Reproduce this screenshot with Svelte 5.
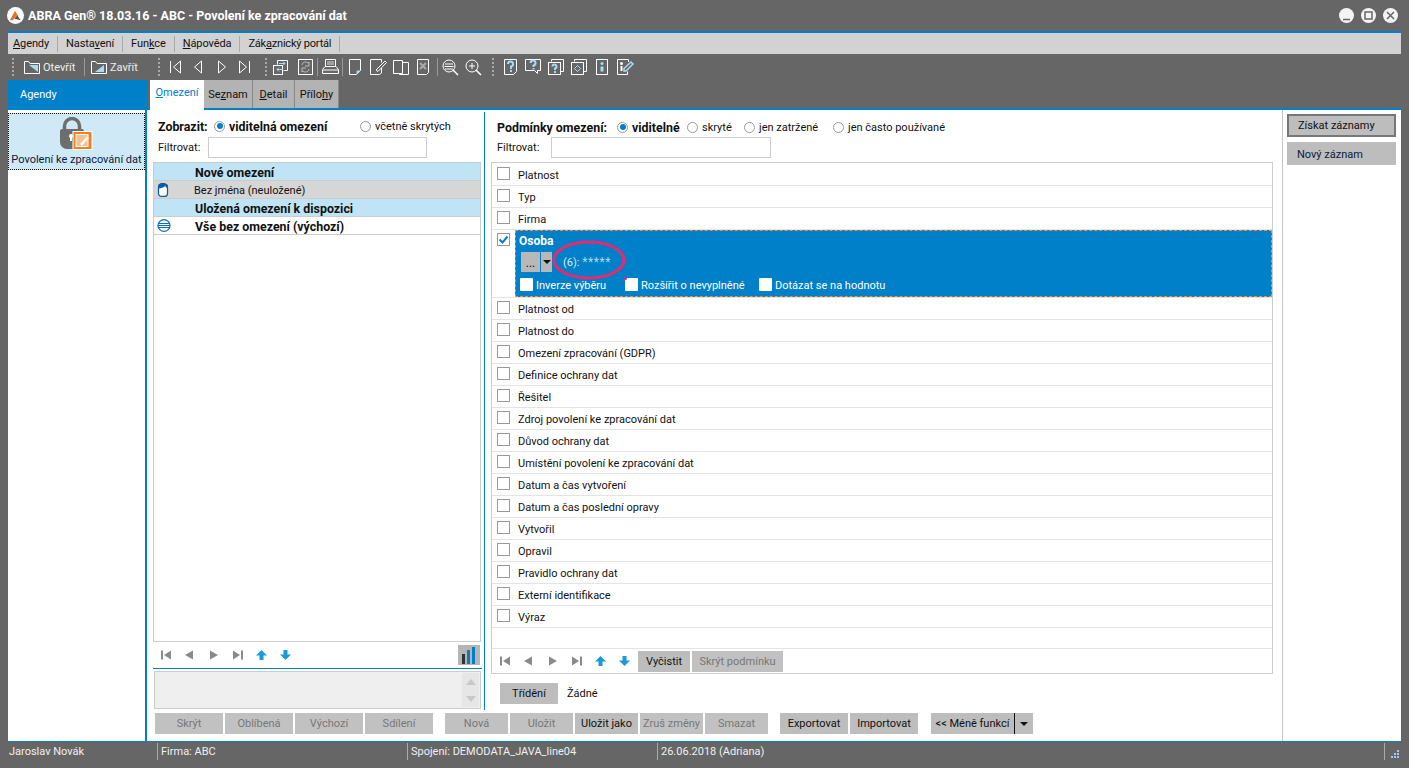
<script>
  const conditionsA = ['Platnost', 'Typ', 'Firma'];
  const conditionsB = ['Platnost od','Platnost do','Omezení zpracování (GDPR)','Definice ochrany dat','Řešitel','Zdroj povolení ke zpracování dat','Důvod ochrany dat','Umístění povolení ke zpracování dat','Datum a čas vytvoření','Datum a čas poslední opravy','Vytvořil','Opravil','Pravidlo ochrany dat','Externí identifikace','Výraz'];
  const actionsA = ['Skrýt','Oblíbená','Výchozí','Sdílení'];
</script>

{#snippet nav()}
  <svg class="nav" width="132" height="12" viewBox="0 0 132 12">
    <g fill="#8a8a8a">
      <path d="M1 1.500h2v9H1zM4 6l7-4.500v9z"/>
      <path d="M25 6l8-4.500v9z"/>
      <path d="M50 1.500L58 6l-8 4.500z"/>
      <path d="M73 1.500L80 6l-7 4.500zM81 1.500h2v9h-2z"/>
    </g>
    <g fill="#1a9ad6">
      <path d="M96 6.500L101.500 1l5.500 5.500h-3.500V11h-4V6.500z"/>
      <path d="M120 5.500L125.500 11l5.500-5.500h-3.500V1h-4v4.500z"/>
    </g>
  </svg>
{/snippet}

{#snippet box(checked = false)}
  <span class="box">
    {#if checked}
      <svg width="11" height="11" viewBox="0 0 11 11"><path d="M1.500 5.500l3 3 5-6" fill="none" stroke="#0a7cc4" stroke-width="2"/></svg>
    {/if}
  </span>
{/snippet}

<div class="app">
  <header class="title">
    <svg class="logo" width="17" height="17" viewBox="0 0 18 18">
      <circle cx="9" cy="9" r="9" fill="#fff"/>
      <path d="M3 14L8.500 4l3 5-5.500 5z" fill="#e8742a"/>
      <path d="M8 12.500l3-3.500 3.500 5z" fill="#555"/>
    </svg>
    <span class="title-text">ABRA Gen® 18.03.16 - ABC - Povolení ke zpracování dat</span>
    <span class="win-buttons">
      <svg width="15" height="15" viewBox="0 0 15 15"><circle cx="7.500" cy="7.500" r="7.500" fill="#f4f4f4"/><path d="M4 11.500h7" stroke="#666" stroke-width="1.500"/></svg>
      <svg width="15" height="15" viewBox="0 0 15 15"><circle cx="7.500" cy="7.500" r="7.500" fill="#f4f4f4"/><rect x="4" y="4" width="7" height="7" fill="none" stroke="#666" stroke-width="1.500"/></svg>
      <svg width="15" height="15" viewBox="0 0 15 15"><circle cx="7.500" cy="7.500" r="7.500" fill="#f4f4f4"/><path d="M4 4l7 7M11 4l-7 7" stroke="#666" stroke-width="1.500"/></svg>
    </span>
  </header>

  <nav class="menu">
    <span><u>A</u>gendy</span><span>Nasta<u>v</u>ení</span><span>Fun<u>k</u>ce</span><span><u>N</u>ápověda</span><span>Zák<u>a</u>znický portál</span>
  </nav>

  <div class="toolbar">
    <i class="grip"></i>
    <span class="tool t-open">
      <svg width="16" height="16" viewBox="0 0 16 16"><path d="M.5 14.500v-12h4l1.500 2h9.500v10z" fill="none" stroke="#fff"/><path d="M5 6h9v7z" fill="#a9dcf2"/></svg>Otevřít
    </span>
    <i class="sep m0"></i>
    <span class="tool t-close m6">
      <svg width="16" height="16" viewBox="0 0 16 16"><path d="M.5 14.500v-12h4l1.500 2h9.500v10z" fill="none" stroke="#fff"/><path d="M4 13l9-7v7z" fill="#a9dcf2"/></svg>Zavřít
    </span>
    <i class="grip"></i>
    <svg class="ico m8" width="92" height="16" viewBox="0 0 92 16" fill="none" stroke="#fff">
      <path d="M2.500 2v12M12.500 2l-7 6 7 6z"/><path d="M33.500 2l-7 6 7 6z"/><path d="M50.500 2l7 6-7 6z"/><path d="M71.500 2l7 6-7 6zM81.500 2v12"/>
    </svg>
    <i class="grip m5"></i>
    <svg class="ico m6" width="16" height="16" viewBox="0 0 16 16" fill="none" stroke="#fff"><path d="M4.500 5.500v-4h10v10h-4"/><rect x=".5" y="6.500" width="9" height="9"/><path d="M6 4.500h6M10 2.500l2 2-2 2M10 10.500H4M6 8.500l-2 2 2 2" stroke="#a9dcf2"/></svg>
    <svg class="ico m9" width="15" height="16" viewBox="0 0 15 16" fill="none" stroke="#fff"><rect x=".5" y=".5" width="14" height="15"/><path d="M4 6a3.500 3.500 0 0 1 6-2l1-1v4H7M11 10a3.500 3.500 0 0 1-6 2l-1 1V9h4" stroke="#bbb"/></svg>
    <i class="sep m4"></i>
    <svg class="ico m4" width="17" height="16" viewBox="0 0 17 16" fill="none" stroke="#fff"><path d="M3.500 7.500v-7h10v7"/><path d="M5 3h7M5 5h7" stroke="#ddd"/><path d="M3 7.500h11l2.500 3v4H.5v-4z"/><path d="M1 11h15"/></svg>
    <i class="sep m3"></i>
    <svg class="ico m6" width="12" height="16" viewBox="0 0 12 16" fill="none" stroke="#fff"><path d="M.5.500h11v11l-4 4h-7z"/><path d="M8 15v-3h3" stroke="#a9dcf2" fill="#a9dcf2"/></svg>
    <svg class="ico m9" width="17" height="16" viewBox="0 0 17 16" fill="none" stroke="#fff"><path d="M11.500 3.500v-3H.5v15h9l2-1.500V9"/><path d="M6 11L15 2l1.500 1.500L8 12.500z"/></svg>
    <svg class="ico m6" width="16" height="16" viewBox="0 0 16 16" fill="none" stroke="#fff"><path d="M.5 1.500h9v13h-9zM9.500 3.500h6v12h-9v-1"/></svg>
    <svg class="ico m8" width="12" height="16" viewBox="0 0 12 16" fill="none" stroke="#fff"><path d="M.5.500h11v13l-2 2h-9z"/><path d="M3 4l6 6M9 4l-6 6" stroke="#aaa" stroke-width="2"/></svg>
    <i class="sep m8"></i>
    <svg class="ico m4" width="17" height="17" viewBox="0 0 17 17" fill="none" stroke="#fff"><circle cx="7" cy="7" r="6"/><path d="M3 5h8M2.500 7.500h9M3 10h8"/><path d="M11 11l5 5" stroke-width="1.500"/></svg>
    <svg class="ico m6" width="17" height="17" viewBox="0 0 17 17" fill="none" stroke="#fff"><circle cx="7" cy="7" r="6"/><path d="M4 7h6M7 4v6"/><path d="M11 11l5 5" stroke-width="1.500"/></svg>
    <i class="grip m10"></i>
    <svg class="ico m10" width="13" height="16" viewBox="0 0 13 16" fill="none" stroke="#fff"><path d="M.5.500h12v12l-3 3h-9z"/><path d="M4 5a2.500 2.500 0 1 1 3 2.500V10M7 11v2" stroke="#a9dcf2" stroke-width="2"/></svg>
    <svg class="ico m8" width="16" height="16" viewBox="0 0 16 16" fill="none" stroke="#fff"><path d="M.5.500h15v11h-3v3l-3-3h-9z"/><path d="M5.500 4a2.500 2.500 0 1 1 3 2.500V8M8.500 9v1.500" stroke="#a9dcf2" stroke-width="2"/></svg>
    <svg class="ico m7" width="16" height="16" viewBox="0 0 16 16" fill="none" stroke="#fff"><path d="M3.500 2.500v-2h12v12h-3"/><rect x=".5" y="3.500" width="12" height="12"/><path d="M4.500 7.500a2 2 0 1 1 2.500 2V11M7 12v2" stroke="#a9dcf2" stroke-width="2"/></svg>
    <svg class="ico m7" width="16" height="16" viewBox="0 0 16 16" fill="none" stroke="#fff"><path d="M3.500 2.500v-2h12v12h-3"/><rect x=".5" y="3.500" width="12" height="12"/><path d="M6.500 6.500l3 3-3 3-3-3z" stroke="#a9dcf2"/></svg>
    <svg class="ico m9" width="12" height="16" viewBox="0 0 12 16" fill="none" stroke="#fff"><rect x=".5" y=".5" width="11" height="15"/><circle cx="6" cy="4.500" r="1.500" fill="#a9dcf2" stroke="none"/><path d="M6 7.500v5" stroke="#a9dcf2" stroke-width="3"/></svg>
    <svg class="ico m9" width="17" height="16" viewBox="0 0 17 16" fill="none" stroke="#fff"><path d="M11.500 3V.5H.5v15h10v-3"/><circle cx="4.500" cy="4.500" r="1.500" fill="#fff" stroke="none"/><path d="M4.500 7v5" stroke="#fff" stroke-width="2"/><path d="M7 12V9.500L14 3l2 2-7 7z" stroke="#a9dcf2" stroke-width="1.500"/></svg>
  </div>

  <div class="main">
    <aside class="side">
      <div class="side-head">Agendy</div>
      <div class="side-body">
        <div class="agenda">
          <svg width="36" height="33" viewBox="0 0 36 33">
            <path d="M5.500 13V9a7.500 7.500 0 0 1 15 0v4" fill="none" stroke="#6e6e6e" stroke-width="3.500"/>
            <path d="M3 12h20a2 2 0 0 1 2 2v11a7 7 0 0 1-7 7H8a7 7 0 0 1-7-7V14a2 2 0 0 1 2-2z" fill="#6e6e6e"/>
            <circle cx="12" cy="19" r="2" fill="#fff"/><rect x="11" y="19" width="2" height="5" fill="#fff"/>
            <rect x="14" y="14.500" width="19" height="18" fill="#f08020" stroke="#fff"/>
            <rect x="17" y="17.500" width="12" height="12" fill="#f8c090" stroke="#fff"/>
            <path d="M22 28l7-8" stroke="#fff" stroke-width="2.500"/>
          </svg>
          <span>Povolení ke zpracování dat</span>
        </div>
      </div>
    </aside>

    <section class="work">
      <div class="tabs">
        <span class="tab active"><u>O</u>mezení</span><span class="tab t2">Se<u>z</u>nam</span><span class="tab t3"><u>D</u>etail</span><span class="tab t4">Přílo<u>h</u>y</span>
      </div>

      <div class="content">
        <div class="left">
          <div class="show-row">
            <b class="lw1">Zobrazit:</b>
            <span class="radio on"></span><b class="ml lw2">viditelná omezení</b>
            <span class="radio"></span><span class="ml">včetně skrytých</span>
          </div>
          <div class="filter-row">Filtrovat:<span class="input i-left"></span></div>

          <div class="list">
            <div class="li head">Nové omezení</div>
            <div class="li sel">
              <svg class="li-ico" width="12" height="14" viewBox="0 0 12 14"><path d="M1.500 5a4.500 4.500 0 0 1 9 0v5.500a3 3 0 0 1-3 3h-3a3 3 0 0 1-3-3z" fill="#fff" stroke="#0a5fa8" stroke-width="1.300"/><path d="M1 5.500C4 5.500 7 4.500 8 3l2.500 2.500L11 2 7 0H4L1 2z" fill="#0a5fa8"/></svg>
              Bez jména (neuložené)
            </div>
            <div class="li head">Uložená omezení k dispozici</div>
            <div class="li plain">
              <svg class="li-ico" width="14" height="13" viewBox="0 0 14 13"><ellipse cx="7" cy="6.500" rx="6" ry="5.800" fill="#fff" stroke="#0a6fb8" stroke-width="1.200"/><path d="M1.500 4.500h11M1 6.500h12M1.500 8.500h11" stroke="#0a6fb8" stroke-width="1.200"/></svg>
              Vše bez omezení (výchozí)
            </div>
          </div>
          <div class="list-foot">
            {@render nav()}
            <span class="chart">
              <svg width="16" height="17" viewBox="0 0 16 17"><path d="M1 7h3v10H1z" fill="#333"/><path d="M6 3h3v14H6z" fill="#0a7cc4"/><path d="M11 0h3v17h-3z" fill="#0a7cc4"/></svg>
            </span>
          </div>

          <div class="desc-wrap">
            <div class="desc">
              <div class="scroll">
                <svg width="10" height="6" viewBox="0 0 10 6"><path d="M5 0l5 6H0z" fill="#c8c8c8"/></svg>
                <svg width="10" height="6" viewBox="0 0 10 6"><path d="M0 0h10L5 6z" fill="#c8c8c8"/></svg>
              </div>
            </div>
          </div>
        </div>

        <div class="right">
          <div class="show-row cond">
            <b class="rw1">Podmínky omezení:</b>
            <span class="radio on"></span><b class="ml rw2">viditelné</b>
            <span class="radio"></span><span class="ml rw3">skryté</span>
            <span class="radio"></span><span class="ml rw4">jen zatržené</span>
            <span class="radio"></span><span class="ml">jen často používané</span>
          </div>
          <div class="filter-row fr2">Filtrovat:<span class="input i-right"></span></div>

          <div class="conds">
            <div class="rows">
              {#each conditionsA as c}
                <div class="row">{@render box()}<span>{c}</span></div>
              {/each}
              <div class="row-open">
                <div class="open-check">{@render box(true)}</div>
                <div class="open-body">
                  <b>Osoba</b>
                  <div class="value-line">
                    <span class="dots">...</span><span class="drop"><i class="tri"></i></span>
                    <span class="value">(6): <em>*****</em></span>
                    <svg class="circle" width="74" height="40" viewBox="0 0 74 40"><ellipse cx="37" cy="20" rx="35" ry="18" fill="none" stroke="#e8296e" stroke-width="3"/></svg>
                  </div>
                  <div class="opts">
                    <span class="opt o1"><i class="wb"></i><span>Inverze výběru</span></span>
                    <span class="opt o2"><i class="wb"></i><span>Rozšířit o nevyplněné</span></span>
                    <span class="opt"><i class="wb"></i><span>Dotázat se na hodnotu</span></span>
                  </div>
                </div>
              </div>
              {#each conditionsB as c}
                <div class="row">{@render box()}<span>{c}</span></div>
              {/each}
            </div>
            <div class="cond-foot">
              {@render nav()}
              <span class="btn dark b-clear">Vyčistit</span>
              <span class="btn off b-hide">Skrýt podmínku</span>
            </div>
          </div>

          <div class="sort">
            <span class="btn dark b-sort">Třídění</span><span>Žádné</span>
          </div>
        </div>

        <div class="bottom">
          {#each actionsA as a}<span class="btn off w68">{a}</span>{/each}
          <span class="btn off w63 ms">Nová</span>
          <span class="btn off w63">Uložit</span>
          <span class="btn dark w63">Uložit jako</span>
          <span class="btn off w63">Zruš změny</span>
          <span class="btn off w63">Smazat</span>
          <span class="btn dark w68 ms">Exportovat</span>
          <span class="btn dark w68">Importovat</span>
          <span class="btn dark less">&lt;&lt; Méně funkcí</span><span class="btn dark arrow"><i class="tri"></i></span>
        </div>

        <div class="actions">
          <span class="get">Získat záznamy</span>
          <span class="new">Nový záznam</span>
        </div>
      </div>
    </section>
  </div>

  <footer class="status">
    <span class="s-user">Jaroslav Novák</span>
    <span class="s-firm">Firma: ABC</span>
    <span class="s-conn">Spojení: DEMODATA_JAVA_line04</span>
    <span class="s-date">26.06.2018 (Adriana)</span>
    <span class="s-end">
      <svg width="9" height="9" viewBox="0 0 9 9" fill="#a8c4ff"><path d="M0 7h2v2H0zM3 7h2v2H3zM6 7h2v2H6zM3 4h2v2H3zM6 4h2v2H6zM6 1h2v2H6z"/></svg>
    </span>
  </footer>
</div>

<style>
  :global(body) { margin: 0; }
  .app {
    width: 1409px; height: 768px; background: #666; overflow: hidden;
    display: flex; flex-direction: column;
    font: 11px/15px "Roboto", sans-serif; color: #111;
  }
  b { font-size: 12.400px; }
  u { text-underline-offset: 1px; }
  em { font-style: normal; }

  .title { height: 31px; flex: none; display: flex; align-items: center; padding: 0 11px 0 7px; box-sizing: border-box; color: #fff; }
  .title-text { margin-left: 4px; font-size: 12.500px; font-weight: 700; white-space: nowrap; }
  .logo { flex: none; }
  .win-buttons { margin-left: auto; display: flex; gap: 7px; }

  .menu { height: 23px; box-sizing: border-box; flex: none; margin: 0 8px; border-top: 2px solid #0080c8; background: #d2d2d2; display: flex; align-items: center; padding-left: 5px; letter-spacing: -.1px; }
  .menu span { padding-right: 8px; margin-right: 8px; border-right: 1px solid #aaa; white-space: nowrap; line-height: 16px; }
  .menu span:last-child { letter-spacing: -.2px; }

  .toolbar { height: 26px; flex: none; display: flex; align-items: center; color: #eee; padding-left: 12px; }
  .grip { width: 0; height: 18px; border-left: 2px dotted #aaa; flex: none; }
  .sep { width: 1px; height: 18px; background: #999; flex: none; }
  .tool { display: flex; align-items: center; gap: 3px; white-space: nowrap; flex: none; }
  .t-open { margin-left: 10px; width: 60px; }
  .t-close { width: 67px; }
  .ico { flex: none; }
  .m0 { margin-left: 0; }
  .m3 { margin-left: 3px; }
  .m4 { margin-left: 4px; }
  .m5 { margin-left: 5px; }
  .m6 { margin-left: 6px; }
  .m7 { margin-left: 7px; }
  .m8 { margin-left: 8px; }
  .m9 { margin-left: 9px; }
  .m10 { margin-left: 10px; }

  .main { flex: 1; min-height: 0; margin: 0 8px; display: flex; border-bottom: 1px solid #0080c8; }
  .side { width: 137px; flex: none; display: flex; flex-direction: column; background: #fff; border-right: 2px solid #0080c8; }
  .side-head { height: 30px; flex: none; box-sizing: border-box; background: #0080c8; color: #fff; padding: 7px 0 0 12px; }
  .side-body { flex: 1; padding-top: 3px; background: #fff; }
  .agenda {
    height: 57px; box-sizing: border-box; background: #d0e9f6; outline: 1px dotted #111; outline-offset: -1px;
    display: flex; flex-direction: column; align-items: center; color: #0a1a40; padding-top: 4px; white-space: nowrap;
  }
  .agenda span { margin-top: 2px; }

  .work { flex: 1; min-width: 0; display: flex; flex-direction: column; background: #666; }
  .tabs { height: 28px; flex: none; padding-left: 3px; display: flex; }
  .tab { height: 28px; width: 49px; box-sizing: border-box; background: #b3b3b3; border-right: 1px solid #888; padding-top: 7px; text-align: center; white-space: nowrap; color: #111; flex: none; }
  .tab.active { background: #fff; color: #0080c8; width: 54px; height: 30px; position: relative; z-index: 1; padding-top: 5px; border: 0; }
  .t3 { width: 42px; }
  .t4 { width: 44px; }

  .content {
    flex: 1; min-height: 0; background: #fff; border-top: 2px solid #0080c8;
    display: grid; grid-template-columns: 338px 797px 119px; grid-template-rows: 600px 31px;
  }
  .left { grid-column: 1; grid-row: 1; margin-top: 2px; padding: 6px 2px 0 6px; border-right: 1px solid #0080c8; display: flex; flex-direction: column; min-height: 0; box-sizing: border-box; }
  .right { grid-column: 2; grid-row: 1; padding: 9px 9px 0 6px; display: flex; flex-direction: column; min-height: 0; }

  .show-row { display: flex; align-items: center; height: 16px; flex: none; padding-left: 5px; white-space: nowrap; }
  .ml { margin-left: 4px; }
  .radio { width: 9px; height: 9px; border: 1px solid #999; border-radius: 50%; flex: none; position: relative; background: #fff; }
  .radio.on::after { content: ""; position: absolute; inset: 1.500px; border-radius: 50%; background: #0080c8; }
  .lw1 { width: 56px; flex: none; }
  .lw2 { width: 131px; flex: none; }
  .rw1 { width: 120px; flex: none; }
  .rw2 { width: 55px; flex: none; }
  .rw3 { width: 42px; flex: none; }
  .rw4 { width: 74px; flex: none; }
  .filter-row { display: flex; align-items: center; height: 21px; flex: none; padding-left: 5px; margin-top: 3px; line-height: 18px; }
  .input { display: block; height: 21px; box-sizing: border-box; border: 1px solid #ccc; background: #fff; }
  .i-left { width: 219px; margin-left: auto; margin-right: 55px; }
  .i-right { width: 220px; margin-left: 54px; position: absolute; }
  .fr2 { padding-left: 6px; margin-top: 2px; position: relative; }

  .list { margin-top: 4px; flex: 1; min-height: 0; border: 1px solid #ccc; padding: 0; display: flex; flex-direction: column; margin-right: 1px; }
  .li { height: 18px; flex: none; box-sizing: border-box; padding: 2px 0 0 40px; border-bottom: 1px solid #ccc; display: flex; align-items: center; position: relative; white-space: nowrap; }
  .head { background: #bfe4f5; font-weight: 700; font-size: 12.400px; padding-left: 41px; }
  .sel { background: #d6d6d6; }
  .plain { font-weight: 700; font-size: 12.400px; padding-left: 41px; }
  .li-ico { position: absolute; left: 3px; top: 2px; }
  .list-foot { height: 26px; flex: none; display: flex; align-items: center; padding-left: 7px; position: relative; }
  .nav { display: block; flex: none; }
  .chart { position: absolute; right: 2px; top: 3px; width: 22px; height: 20px; background: #b5b5b5; display: flex; align-items: center; justify-content: center; }
  .desc-wrap { height: 42px; flex: none; box-sizing: border-box; padding: 2px 1px 0; border-top: 1px solid #0080c8; }
  .desc { height: 38px; box-sizing: border-box; border: 1px solid #ccc; background: #efefef; display: flex; justify-content: flex-end; padding: 1px; }
  .scroll { width: 17px; background: #e6e6e6; display: flex; flex-direction: column; align-items: center; justify-content: space-around; }

  .cond { padding-left: 6px; }
  .conds { margin-top: 4px; flex: 1; min-height: 0; border: 1px solid #ccc; display: flex; flex-direction: column; }
  .rows { flex: 1; min-height: 0; padding-top: 1px; }
  .row { height: 22px; box-sizing: border-box; border-bottom: 1px solid #e4e4e4; display: flex; align-items: center; padding-left: 5px; white-space: nowrap; }
  .row span:last-child { margin-left: 8px; padding-top: 2px; }
  .box { width: 11px; height: 11px; border: 1px solid #999; flex: none; background: #fff; display: block; margin-top: -3px; }
  .box svg { display: block; }
  .row-open { height: 68px; box-sizing: border-box; display: flex; border-bottom: 1px solid #e4e4e4; }
  .open-check { width: 23px; flex: none; padding: 6px 0 0 5px; box-sizing: border-box; }
  .open-body { flex: 1; background: #0080c8; border: 1px dashed #ff8c2a; color: #fff; padding: 3px 0 0 3px; box-sizing: border-box; }
  .open-body b { display: block; line-height: 15px; font-size: 12px; }
  .value-line { display: flex; align-items: center; height: 20px; margin-top: 3px; position: relative; padding-left: 2px; }
  .dots { width: 19px; height: 20px; background: #b8b8b8; color: #111; text-align: center; line-height: 22px; font-size: 12px; }
  .drop { width: 11px; height: 20px; margin-left: 1px; background: #b8b8b8; display: flex; align-items: center; justify-content: center; }
  .tri { width: 0; height: 0; border: 4px solid transparent; border-top: 4px solid #111; border-bottom: 0; display: block; }
  .value { margin-left: 11px; color: #d8ecf8; }
  .value em { color: #a9dcf2; font-size: 12px; letter-spacing: .6px; }
  .circle { position: absolute; left: 33px; top: -12px; }
  .opts { display: flex; margin-top: 5px; padding-left: 1px; }
  .opt { display: flex; align-items: center; gap: 3px; white-space: nowrap; height: 15px; flex: none; }
  .opt span { padding-top: 2px; }
  .o1 { width: 105px; }
  .o2 { width: 134px; position: relative; }
  .o2::before { content: ""; position: absolute; left: -1px; top: 0; width: 3px; height: 3px; border-radius: 50%; background: #e8296e; }
  .wb { width: 13px; height: 13px; background: #fff; border-radius: 1px; display: block; flex: none; }

  .cond-foot { height: 25px; flex: none; border-top: 1px solid #e4e4e4; display: flex; align-items: center; padding-left: 7px; box-sizing: border-box; }
  .btn { display: inline-flex; align-items: center; justify-content: center; height: 21px; white-space: nowrap; box-sizing: border-box; flex: none; }
  .dark { background: #bdbdbd; color: #111; }
  .off { background: #c1c1c1; color: #777; }
  .b-clear { width: 52px; margin-left: 7px; }
  .b-hide { width: 91px; margin-left: 2px; }
  .sort { height: 36px; flex: none; display: flex; align-items: flex-start; gap: 9px; padding: 9px 0 0 9px; box-sizing: border-box; line-height: 21px; }

  .b-sort { width: 58px; }

  .bottom { grid-column: 1 / 3; grid-row: 2; display: flex; gap: 2px; padding: 3px 0 0 8px; align-items: flex-start; }
  .w68 { width: 68px; }
  .w63 { width: 63px; }
  .ms { margin-left: 10px; }
  .less { width: 84px; margin-left: 11px; border-right: 1px solid #111; margin-right: -2px; }
  .arrow { width: 18px; }

  .actions { grid-column: 3; grid-row: 1 / 3; border-left: 1px solid #c4c4c4; padding: 4px 5px 0 4px; display: flex; flex-direction: column; }
  .get { height: 23px; box-sizing: border-box; border: 2px solid #777; background: #bdbdbd; padding: 2px 0 0 9px; color: #111; white-space: nowrap; }
  .new { height: 23px; box-sizing: border-box; margin-top: 5px; background: #bdbdbd; padding: 5px 0 0 10px; color: #0a1a40; white-space: nowrap; }

  .status { height: 26px; flex: none; box-sizing: border-box; padding-top: 1px; display: flex; color: #f0f0f0; align-items: flex-start; white-space: nowrap; }
  .status span { height: 17px; line-height: 17px; box-sizing: border-box; flex: none; }
  .s-user { width: 157px; padding-left: 9px; }
  .s-firm { width: 250px; border-left: 1px solid #aaa; padding-left: 3px; }
  .s-conn { width: 250px; border-left: 1px solid #aaa; padding-left: 3px; }
  .s-date { width: 727px; border-left: 1px solid #aaa; padding-left: 3px; }
  .s-end { width: 22px; border-left: 1px solid #aaa; padding: 6px 0 0 6px; }
  .s-end svg { display: block; }
</style>
